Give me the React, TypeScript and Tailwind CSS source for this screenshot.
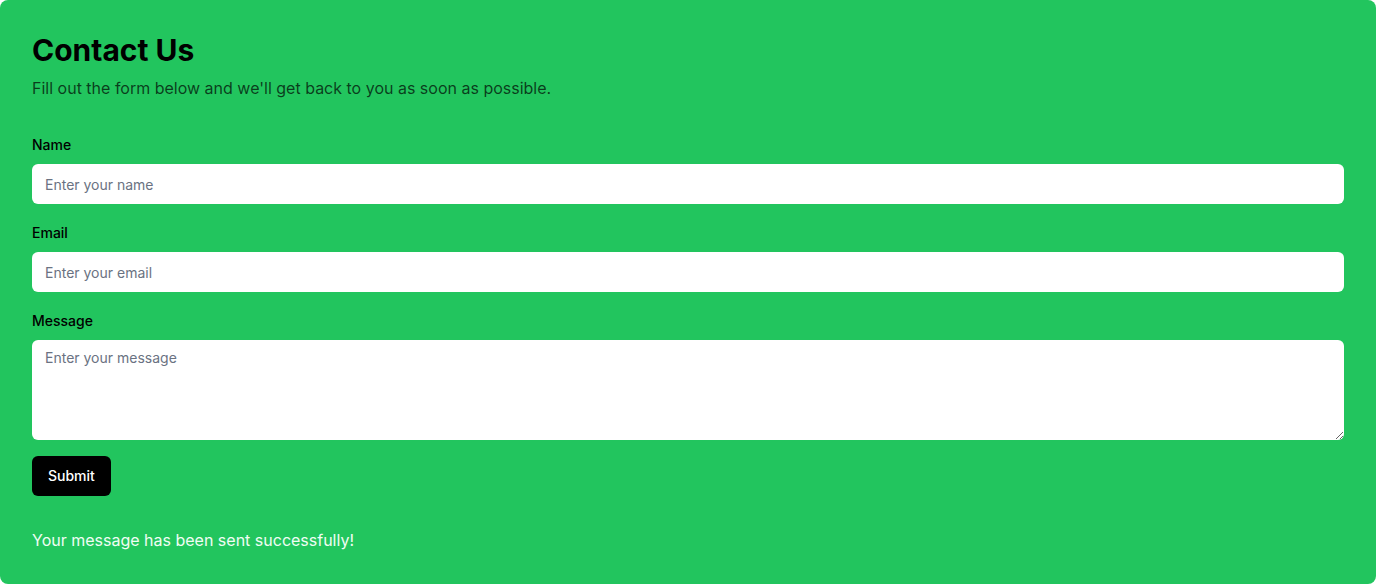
import React from "react";

const App = () => {
  return (
    <div
      className="min-h-[584px] rounded-lg bg-[#22c55e] p-8 text-black"
      style={{ fontFamily: "Inter, 'Noto Sans', sans-serif" }}
    >
      {/* Header */}
      <h1 className="text-3xl font-bold">Contact Us</h1>
      <p className="mt-2 text-base text-black/70">
        Fill out the form below and we'll get back to you as soon as possible.
      </p>

      {/* Form */}
      <form className="mt-[35px] flex flex-col gap-[19px]" onSubmit={(e) => e.preventDefault()}>
        <div>
          <label className="mb-[9px] block text-sm font-medium">Name</label>
          <input
            type="text"
            placeholder="Enter your name"
            className="h-10 w-full rounded-md bg-white px-[13px] text-sm placeholder-gray-500 outline-none"
          />
        </div>
        <div>
          <label className="mb-[9px] block text-sm font-medium">Email</label>
          <input
            type="email"
            placeholder="Enter your email"
            className="h-10 w-full rounded-md bg-white px-[13px] text-sm placeholder-gray-500 outline-none"
          />
        </div>
        <div>
          <label className="mb-[9px] block text-sm font-medium">Message</label>
          <textarea
            placeholder="Enter your message"
            className="block h-[100px] w-full rounded-md bg-white px-[13px] py-2 text-sm placeholder-gray-500 outline-none"
          />
          <button
            type="submit"
            className="mt-4 h-10 rounded-md bg-black px-4 text-sm font-medium text-white"
          >
            Submit
          </button>
        </div>
      </form>

      <p className="mt-8 text-base text-green-50">
        Your message has been sent successfully!
      </p>
    </div>
  );
};

export default App;
